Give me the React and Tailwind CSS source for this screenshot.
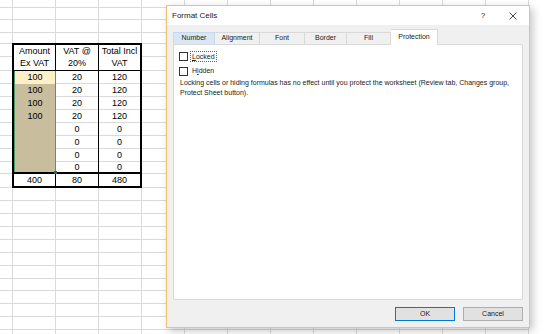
import React from 'react';

const COLS = 13;
const ROWS = 27;
const TABLE_CELLS = 33;

const data = [
  ['100', '20', '120'],
  ['100', '20', '120'],
  ['100', '20', '120'],
  ['100', '20', '120'],
  ['', '0', '0'],
  ['', '0', '0'],
  ['', '0', '0'],
  ['', '0', '0'],
];

const tabs = [
  { label: 'Number', w: 'w-[42px]', hover: true },
  { label: 'Alignment', w: 'w-[45px]' },
  { label: 'Font', w: 'w-[45px]' },
  { label: 'Border', w: 'w-[42px]' },
  { label: 'Fill', w: 'w-[44px]' },
  { label: 'Protection', w: 'w-[47px]', active: true },
];

function SheetTable() {
  return (
    <div className="col-start-2 col-span-3 row-start-5 row-span-11 -ml-px -mt-px relative z-10 border-2 border-black bg-white flex flex-col text-[9px] leading-none text-black">
      {/* header */}
      <div className="flex h-[26px] border-b border-black">
        <div className="w-[42px] border-r border-black flex flex-col items-center justify-center gap-[3px]">
          <span>Amount</span>
          <span>Ex VAT</span>
        </div>
        <div className="w-[43px] border-r border-black flex flex-col items-center justify-center gap-[3px]">
          <span>VAT @</span>
          <span>20%</span>
        </div>
        <div className="flex-1 flex flex-col items-center justify-center gap-[3px]">
          <span>Total Incl</span>
          <span>VAT</span>
        </div>
      </div>

      {/* body */}
      <div className="flex">
        <div className="relative w-[42px] border-l border-r border-[#4e9a6a] flex flex-col">
          {data.map((r, i) => (
            <div
              key={i}
              className={
                (i === 7 ? 'h-[10px] ' : 'h-[13px] ') +
                (i === 0 ? 'bg-[#fdf0c9] ' : 'bg-[#c8bd9d] ') +
                'flex items-center justify-center'
              }
            >
              {r[0]}
            </div>
          ))}
          {/* fill handle */}
          <div className="absolute -right-[2px] -bottom-[2px] w-[3px] h-[3px] bg-[#217346]" />
        </div>
        <div className="w-[43px] border-r border-black flex flex-col">
          {data.map((r, i) => (
            <div
              key={i}
              className={
                (i === 7 ? 'h-[10px] ' : 'h-[13px] border-b border-[#dadada] ') +
                'flex items-center justify-center'
              }
            >
              {r[1]}
            </div>
          ))}
        </div>
        <div className="flex-1 flex flex-col">
          {data.map((r, i) => (
            <div
              key={i}
              className={
                (i === 7 ? 'h-[10px] ' : 'h-[13px] border-b border-[#dadada] ') +
                'flex items-center justify-center'
              }
            >
              {r[2]}
            </div>
          ))}
        </div>
      </div>

      {/* totals */}
      <div className="flex h-[14px] border-t-2 border-black">
        <div className="w-[42px] border-r border-black flex items-center justify-center">400</div>
        <div className="w-[43px] border-r border-black flex items-center justify-center">80</div>
        <div className="flex-1 flex items-center justify-center">480</div>
      </div>
    </div>
  );
}

function Checkbox() {
  return <div className="w-[9px] h-[9px] border border-[#333] bg-white shrink-0" />;
}

function FormatCellsDialog() {
  return (
    <div className="absolute left-[166px] top-[5px] z-20 w-[364px] h-[323px] border border-[#f0c06a] bg-[#f0f0f0] shadow-[3px_3px_8px_rgba(0,0,0,0.22)] flex flex-col font-['Liberation_Sans',Arial,sans-serif] text-[#222]">
      <div className="h-[19px] bg-white flex items-center pl-[5px] shrink-0">
        <span className="text-[8px]">Format Cells</span>
        <div className="ml-auto mr-[11px] flex items-center gap-[20px]">
          <span className="w-[10px] text-center text-[8px]">?</span>
          <svg width="10" height="10" viewBox="0 0 10 10">
            <path d="M1.5 1.5 L8.5 8.5 M8.5 1.5 L1.5 8.5" stroke="#333" strokeWidth="0.9" fill="none" />
          </svg>
        </div>
      </div>

      <div className="flex flex-col px-[6px] pt-[4px]">
        <div className="h-[15px] flex items-end">
          {tabs.map((t, i) => (
            <div
              key={t.label}
              className={
                t.w +
                ' flex items-center justify-center text-[7px] border-t border-r ' +
                (i === 0 ? 'border-l ' : '') +
                (t.active
                  ? 'h-[16px] -mb-px relative z-10 bg-white border-[#d9d9d9]'
                  : t.hover
                  ? 'h-[12px] bg-[#d9e7f5] border-[#c5d9ec]'
                  : 'h-[12px] bg-[#f0f0f0] border-[#d9d9d9]')
              }
            >
              {t.label}
            </div>
          ))}
        </div>

        <div className="h-[256px] bg-white border border-[#d9d9d9] pt-[6px] pl-[5px] text-[7px]">
          <div className="h-[11px] flex items-center gap-[2px]">
            <Checkbox />
            <span className="border border-dotted border-[#666] px-px leading-[9px]">
              <span className="underline">L</span>ocked
            </span>
          </div>
          <div className="mt-[4px] h-[11px] flex items-center gap-[3px]">
            <Checkbox />
            <span className="pl-px">
              H<span className="underline">i</span>dden
            </span>
          </div>
          <p className="mt-px pl-px leading-[10px] whitespace-nowrap">
            Locking cells or hiding formulas has no effect until you protect the worksheet (Review tab, Changes group,
            <br />
            Protect Sheet button).
          </p>
        </div>

        <div className="mt-[7px] h-[14px] flex justify-end gap-[8px]">
          <div className="w-[60px] border border-[#0078d7] bg-[#e1e1e1] flex items-center justify-center text-[7px]">
            OK
          </div>
          <div className="w-[60px] border border-[#adadad] bg-[#e1e1e1] flex items-center justify-center text-[7px]">
            Cancel
          </div>
        </div>
      </div>
    </div>
  );
}

export default function App() {
  const fillers = Array.from({ length: COLS * ROWS - TABLE_CELLS });

  return (
    <div className="relative w-[551px] h-[334px] overflow-hidden bg-white font-['Liberation_Sans',Arial,sans-serif]">
      <div className="grid grid-cols-[13px_repeat(12,43px)] grid-rows-[8px_12px_13px_11px_13px_14px_13px_13px_13px_13px_13px_13px_13px_12px_14px_13px_13px_13px_13px_13px_13px_13px_12px_13px_13px_13px_13px]">
        <SheetTable />
        {fillers.map((_, i) => (
          <div key={i} className="border-r border-b border-[#dadada]" />
        ))}
      </div>
      <FormatCellsDialog />
    </div>
  );
}
